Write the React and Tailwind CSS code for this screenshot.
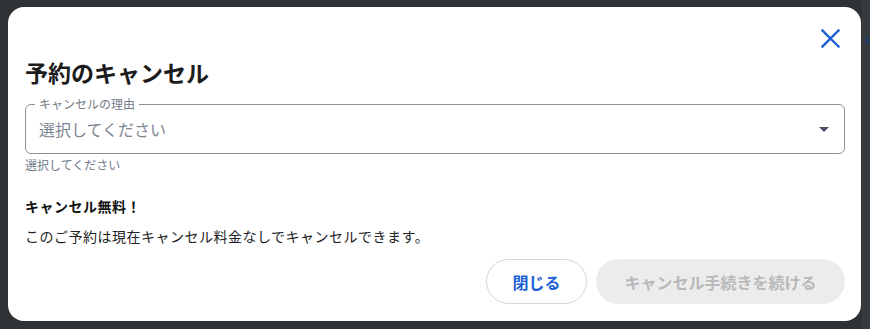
const font = { fontFamily: '"Noto Sans CJK JP", "Noto Sans", sans-serif' }

const CloseIcon = () => (
  <svg width="19" height="19" viewBox="0 0 19 19" fill="none">
    <path d="M1.5 1.5L17.5 17.5M17.5 1.5L1.5 17.5" stroke="#1a5fd6" strokeWidth="2.4" strokeLinecap="square" />
  </svg>
)

const App = () => {
  return (
    <div
      className="relative w-[870px] h-[329px] bg-[#2e3235] pt-[7px] pl-[8px] overflow-hidden"
      style={font}
    >
      {/* page behind overlay */}
      <div className="absolute right-0 top-0 w-[8px] h-[329px] bg-[#363a3d]">
        <span className="absolute left-[3px] top-[29px] text-[13px] font-bold text-[#1d3d73]">u</span>
      </div>

      <div className="relative w-[853px] h-[314px] bg-white rounded-[16px] pl-[17px] pr-[16px] pt-[23px] flex flex-col">
        <div className="flex justify-end h-[18px] pr-[5px]">
          <button className="w-[19px] h-[19px] -mt-[1px]">
            <CloseIcon />
          </button>
        </div>

        <h2 className="mt-[8px] text-[23px] leading-[32px] font-bold text-[#1c1c1c]">予約のキャンセル</h2>

        <div className="relative mt-[16px] h-[50px] border border-[#8c9096] rounded-[6px] flex items-center justify-between pl-[13px] pr-[15px]">
          <span className="absolute -top-[9px] left-[9px] px-[4px] bg-white text-[12px] leading-[16px] text-[#747b87]">
            キャンセルの理由
          </span>
          <span className="text-[16px] leading-[22px] text-[#7d8593]">選択してください</span>
          <span className="w-0 h-0 border-l-[5px] border-r-[5px] border-t-[5px] border-l-transparent border-r-transparent border-t-[#4a5263]" />
        </div>

        <p className="mt-[3px] text-[12px] leading-[16px] text-[#6f7a8b]">選択してください</p>

        <p className="mt-[23px] text-[14px] leading-[20px] font-bold text-[#111] tracking-[0.5px]">キャンセル無料！</p>
        <p className="mt-[10px] text-[14px] leading-[20px] text-[#222] tracking-[0.5px]">
          このご予約は現在キャンセル料金なしでキャンセルできます。
        </p>

        <div className="mt-[13px] flex justify-end gap-[9px]">
          <button className="w-[101px] h-[45px] rounded-full border border-[#d3d6e0] text-[16px] font-bold text-[#1a5fd6]">
            閉じる
          </button>
          <button className="w-[249px] h-[45px] rounded-full bg-[#ececec] text-[16px] font-bold text-[#b9b9b9]">
            キャンセル手続きを続ける
          </button>
        </div>
      </div>
    </div>
  )
}

export default App
